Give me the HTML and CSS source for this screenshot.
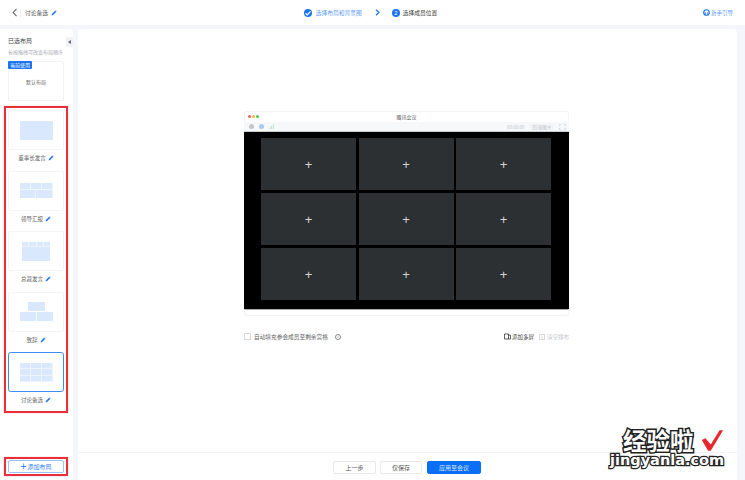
FILE: index.html
```html
<!DOCTYPE html>
<html lang="zh-CN">
<head>
    <meta charset="UTF-8">
    <title>讨论备选</title>
    <link rel="stylesheet" href="styles.css">
</head>
<body>
    <svg class="defs" width="0" height="0">
        <symbol id="pen" viewBox="0 0 10 10">
            <path d="M1 9 L1.6 6.6 L6.8 1.4 L8.6 3.2 L3.4 8.4 Z" fill="#1a73f0"/>
            <path d="M7.4 .9 L8 .4 L9.6 2 L9.1 2.6 Z" fill="#1a73f0"/>
        </symbol>
    </svg>

    <header class="topbar">
        <div class="top-left">
            <svg class="back" width="6" height="9" viewBox="0 0 6 9"><path d="M4.5 .8 L1.2 4.5 L4.5 8.2" fill="none" stroke="#666" stroke-width="1.1"/></svg>
            <span class="top-sep"></span>
            <span class="top-title">讨论备选</span>
            <svg class="pen" width="6" height="6"><use href="#pen"/></svg>
        </div>
        <div class="steps">
            <span class="step-dot">
                <svg width="8" height="8" viewBox="0 0 8 8"><path d="M1.5 4.2 L3.3 5.9 L6.5 2.4" fill="none" stroke="#fff" stroke-width="1.2"/></svg>
            </span>
            <span class="step-done">选择布局和背景图</span>
            <svg class="step-arrow" width="5" height="7" viewBox="0 0 5 7"><path d="M1 .7 L4 3.5 L1 6.3" fill="none" stroke="#1a73f0" stroke-width="1.2"/></svg>
            <span class="step-dot">2</span>
            <span class="step-now">选择成员位置</span>
        </div>
        <div class="guide">
            <svg width="7" height="7" viewBox="0 0 7 7"><circle cx="3.5" cy="3.5" r="2.8" fill="none" stroke="#1a73f0" stroke-width="1.1"/><path d="M2.2 5.5 V3.2 M4.8 5.5 V3.2" stroke="#1a73f0"/></svg>
            <span>新手引导</span>
        </div>
    </header>

    <div class="content">
        <aside class="sidebar">
            <span class="collapse">
                <svg width="3" height="4" viewBox="0 0 3 4"><path d="M3 0 L0 2 L3 4 Z" fill="#667"/></svg>
            </span>
            <h2 class="side-title">已选布局</h2>
            <p class="side-hint">长按拖拽可改变布局顺序</p>
            <div class="default-card">
                <span class="badge">当前使用</span>
                默认布局
            </div>

            <div class="layout-list">
                <div class="layout">
                    <div class="card">
                        <div class="thumb thumb-one"><i></i></div>
                    </div>
                    <div class="layout-name">董事长发言 <svg class="pen" width="6" height="6"><use href="#pen"/></svg></div>
                </div>
                <div class="layout">
                    <div class="card">
                        <div class="thumb thumb-report"><i></i><i></i><i></i><i></i><i></i></div>
                    </div>
                    <div class="layout-name">领导汇报 <svg class="pen" width="6" height="6"><use href="#pen"/></svg></div>
                </div>
                <div class="layout">
                    <div class="card">
                        <div class="thumb thumb-speech"><i></i><i></i><i></i><i></i><i></i></div>
                    </div>
                    <div class="layout-name">总裁发言 <svg class="pen" width="6" height="6"><use href="#pen"/></svg></div>
                </div>
                <div class="layout">
                    <div class="card">
                        <div class="thumb thumb-talk"><i></i><i></i><i></i></div>
                    </div>
                    <div class="layout-name">致辞 <svg class="pen" width="6" height="6"><use href="#pen"/></svg></div>
                </div>
                <div class="layout">
                    <div class="card card-active">
                        <div class="thumb thumb-nine"><i></i><i></i><i></i><i></i><i></i><i></i><i></i><i></i><i></i></div>
                    </div>
                    <div class="layout-name">讨论备选 <svg class="pen" width="6" height="6"><use href="#pen"/></svg></div>
                </div>
            </div>

            <div class="add-wrap">
                <button class="add-btn"><span class="add-plus">+</span>添加布局</button>
            </div>
        </aside>

        <main class="main">
            <div class="stage">
                <div class="window">
                    <div class="win-title">
                        <span class="lights"><i class="red"></i><i class="yellow"></i><i class="green"></i></span>
                        <span class="win-name">腾讯会议</span>
                    </div>
                    <div class="win-tools">
                        <span class="tool-dot gray"></span>
                        <span class="tool-dot blue"></span>
                        <svg width="6" height="5" viewBox="0 0 6 5"><path d="M.5 5 V3.5 M2.5 5 V2 M4.5 5 V.5" stroke="#bfe6c8" stroke-width="1.2"/></svg>
                        <span class="tool-right">
                            <span class="tool-time">00:00:00</span>
                            <span class="tool-view">田 视图 ▾</span>
                            <svg width="7" height="6" viewBox="0 0 7 6"><path d="M.5 2 V.5 H2 M5 .5 H6.5 V2 M6.5 4 V5.5 H5 M2 5.5 H.5 V4" fill="none" stroke="#cfd2d6" stroke-width=".7"/></svg>
                        </span>
                    </div>
                    <div class="screen">
                        <div class="tiles">
                            <div class="tile">+</div>
                            <div class="tile">+</div>
                            <div class="tile">+</div>
                            <div class="tile">+</div>
                            <div class="tile">+</div>
                            <div class="tile">+</div>
                            <div class="tile">+</div>
                            <div class="tile">+</div>
                            <div class="tile">+</div>
                        </div>
                    </div>
                    <div class="win-bottom"></div>
                </div>

                <div class="options">
                    <label class="auto-fill">
                        <span class="check"></span>
                        <span>自动填充参会成员至剩余宫格</span>
                        <span class="info">i</span>
                    </label>
                    <div class="opt-actions">
                        <span class="opt-add">
                            <svg width="7" height="7" viewBox="0 0 7 7"><path d="M.5 1 H4.5 V6 H.5 Z M4.5 2.2 H6.5 V6 H4.5" fill="none" stroke="#333" stroke-width=".8"/></svg>
                            添加多屏
                        </span>
                        <span class="opt-clear">
                            <svg width="6" height="6" viewBox="0 0 6 6"><path d="M.5 .5 H5.5 V5.5 H.5 Z M3 1.5 V4.5" fill="none" stroke="#c4c7cd" stroke-width=".7"/></svg>
                            清空排布
                        </span>
                    </div>
                </div>
            </div>

            <footer class="footer">
                <button class="btn btn-prev">上一步</button>
                <button class="btn btn-save">仅保存</button>
                <button class="btn btn-apply">应用至会议</button>
            </footer>
        </main>
    </div>

    <!-- watermark sits over the page -->
    <div class="watermark">
        <div class="wm-top"><span class="wm-cn">经验啦</span><svg class="wm-check" width="23" height="23" viewBox="0 0 26 25"><path d="M1 12 L5 10 L11 17 L21 1 L25 1 L11 24 L8 24 Z" fill="#e8262c"/></svg></div>
        <div class="wm-url">jingyanla.com</div>
    </div>
</body>
</html>
```

FILE: styles.css
```css
* {
    box-sizing: border-box;
}

html,
body {
    margin: 0;
    height: 480px;
    overflow: hidden;
}

body {
    position: relative;
    background-color: #f5f6fb;
    color: #555;
    font-family: "Noto Sans CJK SC", "Liberation Sans", sans-serif;
    font-size: 6px;
}

.defs {
    position: absolute;
}

i {
    display: block;
}

/* top bar */
.topbar {
    height: 25px;
    padding: 0 12px;
    background-color: #fff;
    display: grid;
    grid-template-columns: 1fr auto 1fr;
    align-items: center;
}

.top-left {
    display: flex;
    align-items: center;
}

.top-sep {
    width: 1px;
    height: 8px;
    margin: 0 4px 0 2px;
    background-color: #eee;
}

.top-title {
    margin-right: 3px;
    font-size: 5.75px;
    color: #555;
}

.steps {
    display: flex;
    align-items: center;
    margin-right: 4px;
    font-size: 5.75px;
}

.step-dot {
    width: 8px;
    height: 8px;
    border-radius: 50%;
    background-color: #1a73f0;
    color: #fff;
    display: flex;
    align-items: center;
    justify-content: center;
    font-family: "Liberation Sans", sans-serif;
}

.step-done {
    margin-left: 4px;
    color: #5d9bf5;
}

.step-arrow {
    margin: 0 12px 0 13px;
}

.step-now {
    margin-left: 3px;
    color: #444;
}

.guide {
    justify-self: end;
    display: flex;
    align-items: center;
    gap: 1px;
    color: #5d9bf5;
    font-size: 5.5px;
}

/* columns */
.content {
    height: 455px;
    padding-top: 4px;
    padding-right: 8px;
    display: flex;
    gap: 5px;
}

.sidebar {
    position: relative;
    width: 73px;
    padding: 7px 5px 0 4px;
    background-color: #fff;
    border-radius: 0 4px 0 0;
    display: flex;
    flex-direction: column;
}

.collapse {
    position: absolute;
    top: 8px;
    right: 0;
    width: 7px;
    height: 10px;
    background-color: #f0f2f7;
    display: flex;
    align-items: center;
    justify-content: center;
}

.side-title {
    margin: 0 0 0 4px;
    font-size: 6px;
    font-weight: 400;
    line-height: 10px;
    color: #444;
}

.side-hint {
    margin: 2px 0 0 4px;
    font-size: 5px;
    line-height: 8px;
    color: #a5a8b0;
    white-space: nowrap;
}

.default-card {
    position: relative;
    height: 40px;
    margin: 5px 4px 0;
    border: 1px solid #f1f2f5;
    border-radius: 2px;
    display: flex;
    align-items: center;
    justify-content: center;
    font-size: 5px;
    color: #666;
}

.badge {
    position: absolute;
    top: -1px;
    left: -1px;
    width: 24px;
    height: 8px;
    border-radius: 1px;
    background-color: #1a73f0;
    color: #fff;
    font-size: 5px;
    line-height: 8px;
    text-align: center;
}

/* the red frame from the screenshot */
.layout-list {
    height: 307px;
    margin-top: 5px;
    padding: 2px 2px 0;
    border: 2px solid #e8303a;
    box-shadow: 0 0 1px #f2a0a6;
}

.layout {
    height: 60.5px;
}

.card {
    height: 40px;
    border: 1px solid #f3f4f7;
    border-radius: 2px;
    display: flex;
    align-items: center;
    justify-content: center;
}

.card-active {
    border-color: #3d8bf5;
    border-radius: 3px;
}

.layout-name {
    margin-top: 4px;
    display: flex;
    justify-content: center;
    align-items: center;
    gap: 2px;
    font-size: 5.5px;
    line-height: 8px;
    color: #666;
}

.thumb {
    display: grid;
    gap: 1px;
}

.thumb i {
    background-color: #d9e8fd;
}

.thumb-report,
.thumb-speech,
.thumb-nine {
    background-color: #eef4fe;
}

.thumb-one {
    width: 33px;
    height: 19px;
    grid-template-columns: 1fr;
}

.thumb-report {
    width: 33px;
    height: 15px;
    grid-template-columns: repeat(6, 1fr);
    grid-template-rows: 6px 1fr;
}

.thumb-report i {
    grid-column: span 2;
}

.thumb-report i:nth-child(n+4) {
    grid-column: span 3;
}

.thumb-speech {
    width: 28px;
    height: 19px;
    grid-template-columns: repeat(4, 1fr);
    grid-template-rows: 4px 1fr;
}

.thumb-speech i:nth-child(5) {
    grid-column: span 4;
}

.thumb-talk {
    width: 33px;
    height: 19px;
    grid-template-columns: 1fr 1fr;
    grid-template-rows: 9px 1fr;
}

.thumb-talk i:first-child {
    grid-column: span 2;
    width: 17px;
    justify-self: center;
}

.thumb-nine {
    width: 33px;
    height: 19px;
    grid-template-columns: repeat(3, 1fr);
    grid-template-rows: repeat(3, 1fr);
}

.add-wrap {
    margin-top: 44px;
    height: 19px;
    padding: 1px 2px;
    border: 2px solid #e8303a;
    box-shadow: 0 0 1px #f2a0a6;
}

.add-btn {
    width: 100%;
    height: 13px;
    padding: 0;
    border: 1px solid #9cc3f8;
    border-radius: 2px;
    background-color: #fff;
    color: #2f7df2;
    font-family: inherit;
    font-size: 6px;
    display: flex;
    align-items: center;
    justify-content: center;
    gap: 1px;
}

.add-plus {
    font-family: "Liberation Sans", sans-serif;
    font-size: 10px;
    line-height: 9px;
}

/* main panel */
.main {
    flex: 1;
    display: flex;
    flex-direction: column;
}

.stage {
    flex: 1;
    padding: 82px 0 0 166px;
    background-color: #fff;
    border-radius: 4px 4px 0 0;
}

.window {
    width: 325px;
}

.win-title {
    position: relative;
    height: 11px;
    border: 1px solid #f3f4f6;
    border-bottom: 0;
    border-radius: 3px 3px 0 0;
    text-align: center;
    font-size: 5px;
    line-height: 10px;
    color: #555;
}

.lights {
    position: absolute;
    left: 3px;
    top: 3px;
    display: flex;
    gap: 1px;
}

.lights i {
    width: 3px;
    height: 3px;
    border-radius: 50%;
}

.red {
    background-color: #f0605a;
}

.yellow {
    background-color: #f3bd3d;
}

.green {
    background-color: #4fc65a;
}

.win-tools {
    height: 10px;
    padding: 0 3px 0 5px;
    background-color: #f7f8fa;
    border-bottom: 1px solid #ccc;
    display: flex;
    align-items: center;
    gap: 5px;
}

.tool-dot {
    width: 5px;
    height: 5px;
    border-radius: 50%;
}

.gray {
    background-color: #c4c6c9;
}

.blue {
    background-color: #a9c8f5;
}

.tool-right {
    margin-left: auto;
    display: flex;
    align-items: center;
    gap: 6px;
    font-size: 4.5px;
    color: #c4c7cc;
}

.tool-view {
    padding: 0 2px;
    background-color: #f1f2f4;
}

.screen {
    height: 177px;
    padding: 6px 18px 0 17px;
    background-color: #000;
}

.tiles {
    display: grid;
    grid-template-columns: repeat(3, 95px);
    grid-template-rows: repeat(3, 52px);
    gap: 3px 2.5px;
}

.tile {
    background-color: #2d3033;
    color: #d4d4d4;
    font-family: "Liberation Sans", sans-serif;
    font-size: 13px;
    display: flex;
    align-items: center;
    justify-content: center;
}

.win-bottom {
    height: 7px;
    border: 1px solid #f3f4f6;
    border-top: 1px solid #aaa;
    border-radius: 0 0 3px 3px;
}

.options {
    width: 325px;
    margin-top: 16px;
    display: flex;
    align-items: center;
    justify-content: space-between;
}

.auto-fill {
    display: flex;
    align-items: center;
    gap: 2px;
    font-size: 5.7px;
    color: #666;
}

.check {
    width: 7px;
    height: 7px;
    border: 1px solid #d5d7dc;
    margin-right: 1px;
}

.info {
    width: 6px;
    height: 6px;
    margin-left: 5px;
    border: 1px solid #888;
    border-radius: 50%;
    font-family: "Liberation Sans", sans-serif;
    font-size: 4px;
    line-height: 4px;
    text-align: center;
}

.opt-actions {
    display: flex;
    gap: 5px;
}

.opt-add,
.opt-clear {
    display: flex;
    align-items: center;
    gap: 1px;
    font-size: 5.5px;
}

.opt-add {
    color: #444;
}

.opt-clear {
    gap: 2px;
    color: #c4c7cd;
}

.footer {
    height: 28px;
    padding: 8px 0 0 255px;
    background-color: #fff;
    border-top: 1px solid #f2f3f6;
    display: flex;
    align-items: flex-start;
    gap: 4px;
}

.btn {
    height: 13px;
    padding: 0;
    border: 1px solid #e8e9ed;
    border-radius: 2px;
    background-color: #fff;
    color: #555;
    font-family: inherit;
    font-size: 6px;
}

.btn-prev {
    width: 43px;
}

.btn-save {
    width: 42px;
}

.btn-apply {
    width: 54px;
    margin-left: 1px;
    border-color: #0a6ff5;
    background-color: #0a6ff5;
    color: #dbe9ff;
}

/* watermark */
.watermark {
    position: absolute;
    left: 610px;
    top: 429px;
    width: 122px;
}

.wm-top {
    display: flex;
    align-items: center;
    height: 23px;
    padding-left: 13px;
}

.wm-cn {
    width: 78px;
    font-size: 23.5px;
    font-weight: 700;
    line-height: 23px;
    color: #fff;
    white-space: nowrap;
    -webkit-text-stroke: 3px #222;
    paint-order: stroke fill;
}

.wm-url {
    font-family: "DejaVu Sans", sans-serif;
    font-size: 14.5px;
    font-weight: 700;
    line-height: 17px;
    color: #fff;
    white-space: nowrap;
    -webkit-text-stroke: 2.5px #222;
    paint-order: stroke fill;
}
```
